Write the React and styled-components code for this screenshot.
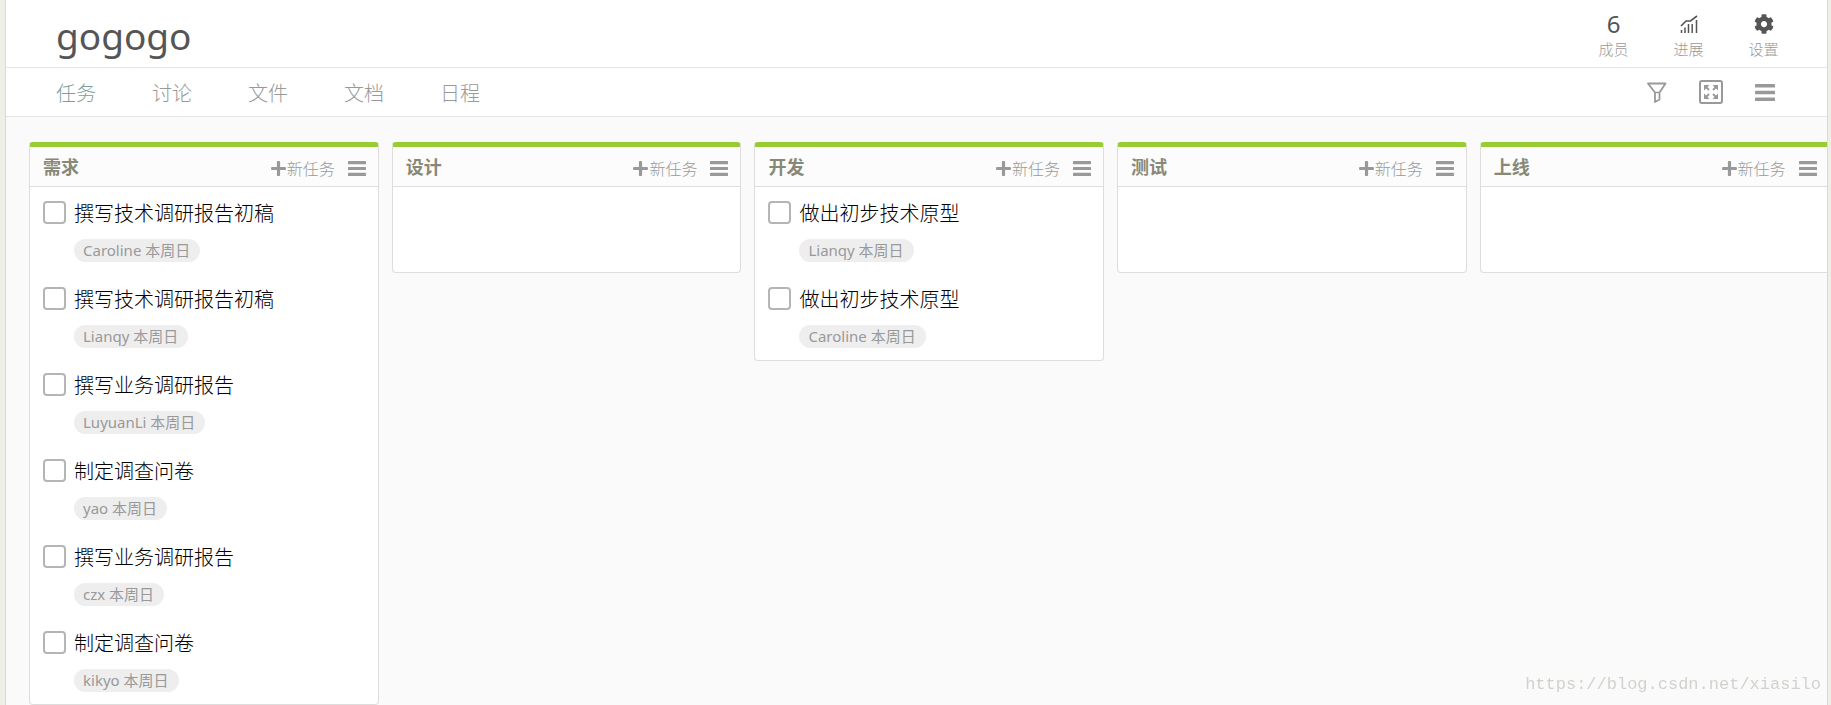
import { useState } from "react";
import styled, { createGlobalStyle } from "styled-components";
import { FaCog, FaPlus } from "react-icons/fa";

const GlobalStyle = createGlobalStyle`
  * {
    box-sizing: border-box;
  }

  body {
    margin: 0;
    background-color: #eef0e6;
    font-family: "Noto Sans", "Noto Sans CJK SC", sans-serif;
  }

  button {
    border: none;
    padding: 0;
    background: none;
    font-family: inherit;
    cursor: pointer;
  }
`;

const Page = styled.div`
  min-height: 100vh;
  margin: 0 3px 0 5px;
  border: 1px solid #d9dbd2;
  border-width: 0 1px;
  background-color: #fafafa;
  display: flex;
  flex-direction: column;
  overflow: hidden;
`;

const Header = styled.header`
  height: 68px;
  padding: 0 26px 0 50px;
  display: flex;
  justify-content: space-between;
  background-color: white;
  border-bottom: 1px solid #e5e5e5;
`;

const Title = styled.h1`
  margin: 0;
  font-size: 37px;
  font-weight: 400;
  line-height: 72px;
  color: #555;
`;

const Stats = styled.div`
  display: flex;
  padding-top: 10px;
`;

const Stat = styled.button`
  width: 75px;
  display: flex;
  flex-direction: column;
  align-items: center;
  font-size: 15px;
  font-weight: 300;
  line-height: 24px;
  color: #999;
`;

const StatValue = styled.span`
  height: 27px;
  display: flex;
  align-items: center;
  font-size: 24px;
  font-weight: 400;
  color: #555;
`;

const Nav = styled.nav`
  height: 49px;
  padding: 0 52px 0 50px;
  display: flex;
  align-items: center;
  justify-content: space-between;
  background-color: white;
  border-bottom: 1px solid #e5e5e5;
`;

const NavLinks = styled.div`
  display: flex;
  gap: 56px;
  padding-top: 3px;
`;

const NavLink = styled.a`
  font-size: 20px;
  font-weight: 300;
  line-height: 45px;
  color: ${({ $active }) => ($active ? "#7d9f98" : "#999")};
  text-decoration: none;
`;

const Tools = styled.div`
  display: flex;
  align-items: center;
  gap: 32px;
`;

const IconButton = styled.button`
  display: flex;
  color: #999;
`;

const Board = styled.main`
  flex: 1;
  display: flex;
  align-items: flex-start;
  gap: 13px;
  padding: 25px 0 0 23px;
`;

const Column = styled.section`
  flex: 0 0 19.45%;
  min-height: 131px;
  background-color: white;
  border: 1px solid #ddd;
  border-top: 5px solid #9c3;
  border-radius: 4px;
`;

const ColumnHeader = styled.div`
  height: 40px;
  padding: 0 12px 0 13px;
  display: flex;
  align-items: center;
  background-color: #fcfcfc;
  border-bottom: 1px solid #ddd;
`;

const ColumnTitle = styled.h2`
  margin: 0 auto 0 0;
  font-size: 18px;
  line-height: 38px;
  color: #887;
`;

const ColumnActions = styled.div`
  display: flex;
  align-items: center;
  gap: 13px;
  padding-top: 4px;
`;

const AddButton = styled.button`
  display: flex;
  align-items: center;
  font-size: 16px;
  font-weight: 300;
  line-height: 34px;
  color: #999;
`;

const TaskList = styled.ul`
  margin: 0;
  padding: 0 0 1px;
  list-style: none;
`;

const TaskItem = styled.li`
  height: 86px;
  padding: 14px 13px 0;
`;

const TaskLabel = styled.label`
  display: flex;
  align-items: flex-start;
  gap: 8px;
  font-size: 20px;
  font-weight: 300;
  line-height: 26px;
  color: black;
`;

const Checkbox = styled.input`
  appearance: none;
  flex: none;
  width: 23px;
  height: 23px;
  margin: 0;
  border: 2px solid #b5b5b5;
  border-radius: 4px;
  background-color: white;

  &:checked {
    background-color: #b5b5b5;
  }
`;

const Tag = styled.button`
  height: 23px;
  margin: 12px 0 0 31px;
  padding: 0 10px 0 9px;
  display: block;
  border-radius: 12px;
  background-color: #eee;
  font-size: 15px;
  line-height: 23px;
  color: #999;
`;

const Watermark = styled.div`
  position: fixed;
  right: 10px;
  bottom: 8px;
  font-family: "Liberation Mono", monospace;
  font-size: 17px;
  line-height: 24px;
  color: #d2d2cc;
  pointer-events: none;
`;

const columns = [
  {
    title: "需求",
    tasks: [
      { name: "撰写技术调研报告初稿", member: "Caroline" },
      { name: "撰写技术调研报告初稿", member: "Lianqy" },
      { name: "撰写业务调研报告", member: "LuyuanLi" },
      { name: "制定调查问卷", member: "yao" },
      { name: "撰写业务调研报告", member: "czx" },
      { name: "制定调查问卷", member: "kikyo" },
    ],
  },
  { title: "设计", tasks: [] },
  {
    title: "开发",
    tasks: [
      { name: "做出初步技术原型", member: "Lianqy" },
      { name: "做出初步技术原型", member: "Caroline" },
    ],
  },
  { title: "测试", tasks: [] },
  { title: "上线", tasks: [] },
];

const tabs = ["任务", "讨论", "文件", "文档", "日程"];

function BarsIcon({ width, height }) {
  return (
    <svg width={width} height={height} viewBox="0 0 20 17" preserveAspectRatio="none" fill="currentColor">
      <rect width="20" height="3.6" rx="0.6" />
      <rect y="6.700" width="20" height="3.6" rx="0.6" />
      <rect y="13.400" width="20" height="3.6" rx="0.6" />
    </svg>
  );
}

function ChartIcon() {
  return (
    <svg width="18" height="18" viewBox="0 0 18 18" fill="none" stroke="currentColor">
      <path d="M1 11 6 6H10.500L17 1" strokeWidth="1.600" />
      <path d="M1.500 18V15M5 18V12.500M8.500 18V9M12.200 18V9M16.500 18V5" strokeWidth="1.500" />
    </svg>
  );
}

function FunnelIcon() {
  return (
    <svg width="20" height="21" viewBox="0 0 20 21" fill="none" stroke="currentColor" strokeWidth="1.800" strokeLinejoin="round">
      <path d="M1 1.500H18.500L12.500 10.500V17.500L8 20V10.500Z" />
      <path d="M8 10.500H12.500" strokeWidth="1.400" />
    </svg>
  );
}

function ExpandIcon() {
  return (
    <svg width="24" height="24" viewBox="0 0 24 24" fill="none" stroke="currentColor">
      <rect x="1" y="1" width="22" height="22" rx="2" strokeWidth="2" />
      <path d="M10 10 6 6M14 10 18 6M10 14 6 18M14 14 18 18" strokeWidth="1.800" />
      <path d="M5 5H10.500L5 10.500ZM19 5V10.500L13.500 5ZM5 19V13.500L10.500 19ZM19 19H13.500L19 13.500Z" fill="currentColor" stroke="none" />
    </svg>
  );
}

function Task({ name, member }) {
  const [done, setDone] = useState(false);

  return (
    <TaskItem>
      <TaskLabel>
        <Checkbox type="checkbox" checked={done} onChange={() => setDone(!done)} />
        {name}
      </TaskLabel>
      <Tag>{member} 本周日</Tag>
    </TaskItem>
  );
}

export default function App() {
  return (
    <>
      <GlobalStyle />
      <Page>
        <Header>
          <Title>gogogo</Title>
          <Stats>
            <Stat>
              <StatValue>6</StatValue>
              成员
            </Stat>
            <Stat>
              <StatValue>
                <ChartIcon />
              </StatValue>
              进展
            </Stat>
            <Stat>
              <StatValue>
                <FaCog size={20} />
              </StatValue>
              设置
            </Stat>
          </Stats>
        </Header>
        <Nav>
          <NavLinks>
            {tabs.map((tab, index) => (
              <NavLink key={tab} href="#" $active={index === 0}>
                {tab}
              </NavLink>
            ))}
          </NavLinks>
          <Tools>
            <IconButton aria-label="筛选">
              <FunnelIcon />
            </IconButton>
            <IconButton aria-label="全屏">
              <ExpandIcon />
            </IconButton>
            <IconButton aria-label="菜单">
              <BarsIcon width={20} height={17} />
            </IconButton>
          </Tools>
        </Nav>
        <Board>
          {columns.map((column) => (
            <Column key={column.title}>
              <ColumnHeader>
                <ColumnTitle>{column.title}</ColumnTitle>
                <ColumnActions>
                  <AddButton>
                    <FaPlus size={17} />
                    新任务
                  </AddButton>
                  <IconButton aria-label="列表菜单">
                    <BarsIcon width={18} height={15} />
                  </IconButton>
                </ColumnActions>
              </ColumnHeader>
              <TaskList>
                {column.tasks.map((task, index) => (
                  <Task key={index} name={task.name} member={task.member} />
                ))}
              </TaskList>
            </Column>
          ))}
        </Board>
      </Page>
      <Watermark>https://blog.csdn.net/xiasilo</Watermark>
    </>
  );
}
